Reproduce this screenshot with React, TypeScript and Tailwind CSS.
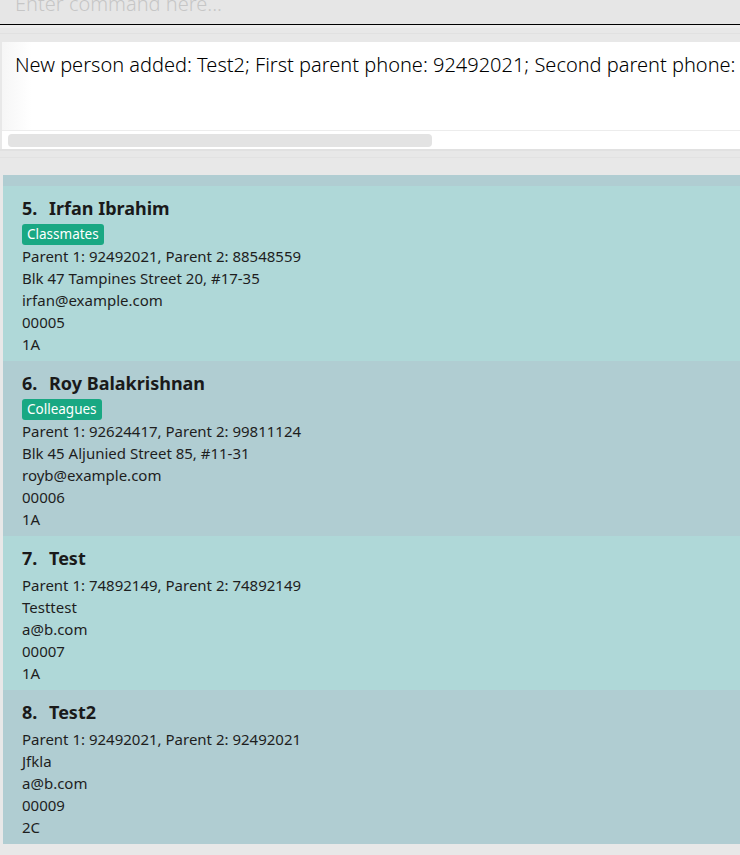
const persons = [
  {
    index: 5,
    name: "Irfan Ibrahim",
    tags: ["Classmates"],
    phones: "Parent 1: 92492021, Parent 2: 88548559",
    address: "Blk 47 Tampines Street 20, #17-35",
    email: "irfan@example.com",
    id: "00005",
    cls: "1A",
  },
  {
    index: 6,
    name: "Roy Balakrishnan",
    tags: ["Colleagues"],
    phones: "Parent 1: 92624417, Parent 2: 99811124",
    address: "Blk 45 Aljunied Street 85, #11-31",
    email: "royb@example.com",
    id: "00006",
    cls: "1A",
  },
  {
    index: 7,
    name: "Test",
    tags: [],
    phones: "Parent 1: 74892149, Parent 2: 74892149",
    address: "Testtest",
    email: "a@b.com",
    id: "00007",
    cls: "1A",
  },
  {
    index: 8,
    name: "Test2",
    tags: [],
    phones: "Parent 1: 92492021, Parent 2: 92492021",
    address: "Jfkla",
    email: "a@b.com",
    id: "00009",
    cls: "2C",
  },
];

const font = { fontFamily: '"Noto Sans", "Open Sans", sans-serif' };

function PersonCard({ p, odd }: { p: (typeof persons)[number]; odd: boolean }) {
  return (
    <div className={`pl-[19px] pt-2 pb-[6px] ${odd ? "bg-[#afd8d8]" : "bg-[#b0cdd2]"}`}>
      <div className="flex h-[30px] text-[18px] font-bold leading-[28px] text-[#1a1a1a]">
        <span className="w-[27px]">{p.index}.</span>
        <span>{p.name}</span>
      </div>
      {p.tags.length > 0 && (
        <div className="flex h-[21px] gap-1">
          {p.tags.map((t) => (
            <span key={t} className="rounded-[3px] bg-[#19a883] px-[5px] text-[13.5px] leading-[21px] text-white">
              {t}
            </span>
          ))}
        </div>
      )}
      <div className="text-[15px] leading-[22px] text-[#1e1e1e]">
        <div>{p.phones}</div>
        <div>{p.address}</div>
        <div>{p.email}</div>
        <div>{p.id}</div>
        <div>{p.cls}</div>
      </div>
    </div>
  );
}

export default function App() {
  return (
    <div className="h-[855px] w-[740px] overflow-hidden bg-[#e8e8e8]" style={font}>
      {/* command box */}
      <div className="h-[25px] overflow-hidden border-b border-black bg-[#e6e6e6] pl-[15px]">
        <div className="-mt-[10px] whitespace-nowrap text-[20px] font-light leading-[28px] text-[#c6c6c6]">
          Enter command here...
        </div>
      </div>

      <div className="h-[17px] border-t-[3px] border-[#eeeeee] bg-[#e8e8e8]">
        <div className="mt-[5px] h-px bg-[#e1e1e1]" />
      </div>

      {/* result display */}
      <div className="ml-[2px] flex h-[107px] flex-col bg-gradient-to-r from-[#f6f6f6] via-white via-[4%] to-white">
        <div className="flex-1 overflow-hidden whitespace-nowrap pl-[13px] pt-[9px] text-[20px] font-light leading-[28px] text-black">
          New person added: Test2; First parent phone: 92492021; Second parent phone: 92492021; Address: Jfkla
        </div>
        <div className="h-[19px] border-t border-[#ececec] bg-white px-[6px] pt-[3px]">
          <div className="h-[13px] w-[424px] rounded-[4px] bg-[#e3e3e3]" />
        </div>
      </div>

      <div className="h-[26px] bg-[#e8e8e8]">
        <div className="h-[2px] bg-[#e1e1e1]" />
        <div className="mt-[6px] h-px bg-[#e2e2e2]" />
      </div>

      {/* person list */}
      <div className="ml-[3px] bg-[#b0cdd2] pt-[11px]">
        {persons.map((p, i) => (
          <PersonCard key={p.index} p={p} odd={i % 2 === 0} />
        ))}
      </div>
    </div>
  );
}
